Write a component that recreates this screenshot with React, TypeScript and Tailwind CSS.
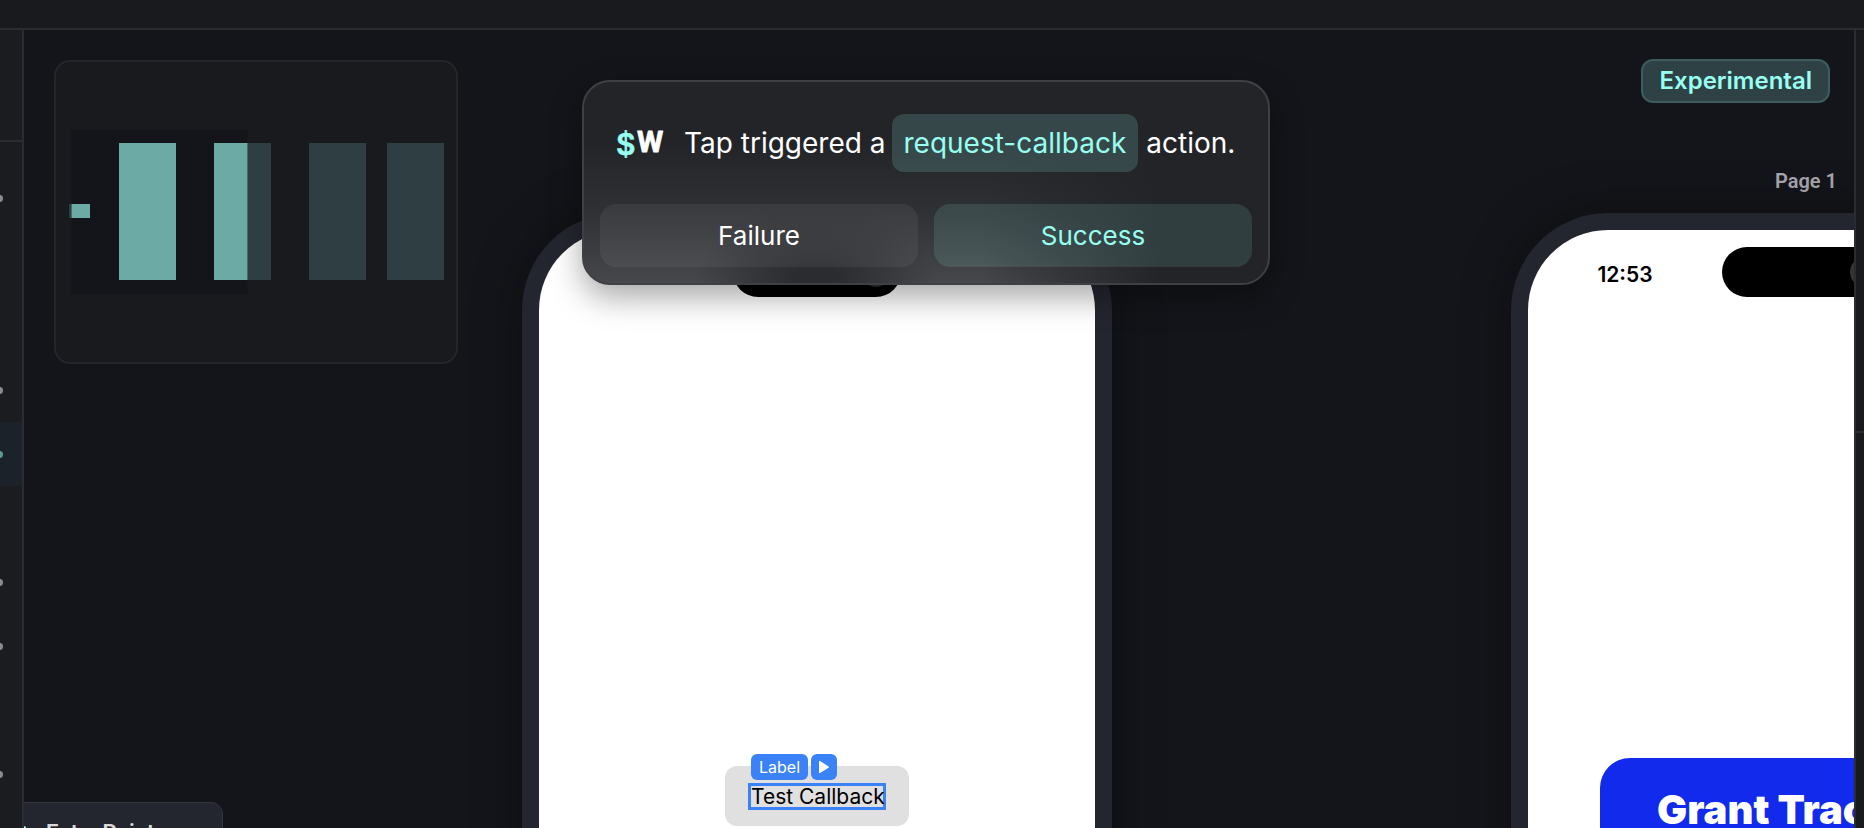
import React from 'react';
import { clsx } from 'clsx';

interface Row {
  id: number;
  hasDot: boolean;
  selected?: boolean;
}

const ROWS: Row[] = [
  { id: 1, hasDot: true },
  { id: 2, hasDot: false },
  { id: 3, hasDot: false },
  { id: 4, hasDot: true },
  { id: 5, hasDot: true, selected: true },
  { id: 6, hasDot: false },
  { id: 7, hasDot: true },
  { id: 8, hasDot: true },
  { id: 9, hasDot: false },
  { id: 10, hasDot: true },
];

const Logo: React.FC = () => (
  <svg className="shrink-0" width="48" height="36" viewBox="0 0 48 36" aria-hidden="true" strokeLinejoin="round">
    <text x="0" y="30" fontSize="30" fontWeight="600" fontFamily="Inter, sans-serif" fill="#98fff0" stroke="#98fff0" strokeWidth="0.5">$</text>
    <text x="21" y="27" fontSize="30" fontWeight="700" fontFamily="Roboto, sans-serif" fill="#fff" stroke="#fff" strokeWidth="0.8">W</text>
  </svg>
);

const LeftPanel: React.FC = () => (
  <aside className="w-6 shrink-0 overflow-hidden border-r-2 border-[#2b2c30] bg-[#1b1c1f]">
    <div className="h-28 border-b-2 border-[#2b2c30]" />
    <ul className="pt-6">
      {ROWS.map(row => (
        <li key={row.id} className={clsx('flex h-16 items-center', row.selected && 'bg-[#1c222a]')}>
          {row.hasDot && (
            <span className={clsx('-ml-1 size-[7px] rounded-full', row.selected ? 'bg-[#5b9a93]' : 'bg-[#8a8a8d]')} />
          )}
        </li>
      ))}
    </ul>
  </aside>
);

// Overview of the canvas, the lit part is what the viewport covers
const Minimap: React.FC = () => (
  <div className="absolute left-[30px] top-[30px] h-[304px] w-[404px] overflow-hidden rounded-2xl border-2 border-[#242529] bg-[#191a1d]">
    <svg width="400" height="300" viewBox="56 62 400 300" aria-hidden="true">
      <defs>
        <clipPath id="viewport">
          <rect x="71.5" y="130" width="176" height="164" />
        </clipPath>
        <g id="nodes">
          <rect x="69" y="204" width="21" height="14" />
          <rect x="119" y="143" width="57" height="137" />
          <rect x="214" y="143" width="57" height="137" />
          <rect x="309" y="143" width="57" height="137" />
          <rect x="387" y="143" width="57" height="137" />
        </g>
      </defs>
      <use href="#nodes" fill="#2e3e42" />
      <rect x="71.5" y="130" width="176" height="164" fill="#14151a" />
      <use href="#nodes" fill="#6caaa5" clipPath="url(#viewport)" />
    </svg>
  </div>
);

const Phone: React.FC<{ time?: string; className: string; children: React.ReactNode }> = ({ time, className, children }) => (
  <div className={clsx('absolute top-[183px] h-[1240px] w-[590px] rounded-[97px] bg-[#24262f] p-[17px] shadow-[0_0_50px_rgba(0,0,0,0.35)]', className)}>
    <div className="h-full overflow-hidden rounded-[80px] bg-white">
      <div className="grid h-[84px] grid-cols-[1fr_168px_1fr] items-center">
        <span className="pt-1.5 text-center text-[21px] font-semibold text-black">{time}</span>
        <div className="flex h-[50px] items-center justify-end rounded-full bg-black pr-[10px]">
          <span className="size-[30px] rounded-full bg-[#333]" />
        </div>
      </div>
      {children}
    </div>
  </div>
);

// The layered gradients give the frosted look of the phone behind the dialog
const ActionDialog: React.FC = () => (
  <div
    role="dialog"
    aria-label="Tap action"
    className="absolute left-[558px] top-[50px] w-[688px] rounded-[28px] border-2 border-[#3f4045] bg-[#232428] bg-[radial-gradient(ellipse_120px_90px_at_34%_100%,#2b2c30_20%,transparent),linear-gradient(to_right,transparent_58%,#232428_84%),linear-gradient(to_bottom,#232428_30%,#303135_65%,#47484c)] bg-origin-border px-4 pt-8 pb-4 shadow-[0_12px_32px_rgba(0,0,0,0.35)]"
  >
    <div className="flex items-center px-4 text-[28px] leading-8 whitespace-nowrap text-white">
      <Logo />
      <span className="ml-5">Tap triggered a</span>
      <span className="mr-2 ml-1.5 rounded-xl bg-[#98fff0]/16 px-3 py-[13px] text-[#98fff0]">request-callback</span>
      <span>action.</span>
    </div>
    <div className="mt-8 grid grid-cols-2 gap-4 text-[26px] leading-8">
      <button type="button" className="h-[63px] rounded-2xl bg-white/6 text-white">Failure</button>
      <button type="button" className="h-[63px] rounded-2xl bg-[#98fff0]/12 text-[#98fff0]">Success</button>
    </div>
  </div>
);

const App: React.FC = () => {
  return (
    <div className="flex h-screen flex-col overflow-hidden bg-[#14151a] font-['Inter',sans-serif]">
      <header className="h-[30px] shrink-0 border-b-2 border-[#2b2c30] bg-[#181a1e]" />

      <div className="flex min-h-0 flex-1">
        <LeftPanel />

        <main className="relative min-w-0 flex-1 overflow-hidden">
          <Minimap />

          <Phone className="left-[498px]">
            <div className="mt-[452px] flex justify-center">
              <button type="button" className="relative h-[60px] rounded-xl bg-[#e0e0e0] px-[23px] text-black">
                <span className="block h-[27px] w-[138px] border-3 border-[#3b82f6] text-[21px] leading-[21px] whitespace-nowrap">
                  Test Callback
                </span>
                <span className="absolute -top-3 left-[26px] flex h-[26px] gap-[3px] text-base leading-[26px] text-white">
                  <span className="rounded-md bg-[#3b82f6] px-2">Label</span>
                  <span className="flex w-[26px] items-center justify-center rounded-md bg-[#3b82f6]">
                    <svg width="12" height="14" viewBox="0 0 12 14" fill="currentColor" aria-hidden="true">
                      <path d="M1 1.6v10.8c0 .6.6.9 1 .6l8.600-5.300c.5-.3.5-1 0-1.300L2 1c-.4-.3-1 0-1 .6z" />
                    </svg>
                  </span>
                </span>
              </button>
            </div>
          </Phone>

          <div className="absolute left-[1487px] top-[137px] w-[590px] text-center font-['Roboto',sans-serif] text-xl font-semibold text-[#a8a7ae]">
            <h2>Page 1</h2>
          </div>
          <Phone time="12:53" className="left-[1487px]">
            <div className="mt-[444px] px-[72px]">
              <button type="button" className="h-[104px] w-full rounded-[30px] bg-[#112aeb] text-[40px] font-black whitespace-nowrap text-white">
                Grant Tracking
              </button>
            </div>
          </Phone>

          <div className="absolute -left-3 top-[772px] flex h-[60px] w-[211px] items-center gap-5 rounded-xl border border-[#34353b] bg-[#24262f] font-['Roboto',sans-serif] text-[22px] font-semibold text-[#d8d8dc]">
            <span className="h-3 w-[13px] rounded-xs bg-[#98fff0]" />
            Entry Point
          </div>

          <ActionDialog />

          <div className="absolute right-6 top-[29px] flex h-11 items-center rounded-xl border-2 border-[#3d5c5c] bg-[#2e4246] px-4 text-2xl font-semibold text-[#98fff0]">
            Experimental
          </div>
        </main>

        <aside className="w-[10px] shrink-0 border-l-2 border-[#2b2c30] bg-[#191a1e]">
          <div className="h-[403px] border-b-2 border-[#2b2c30]" />
        </aside>
      </div>
    </div>
  );
};

export default App;
